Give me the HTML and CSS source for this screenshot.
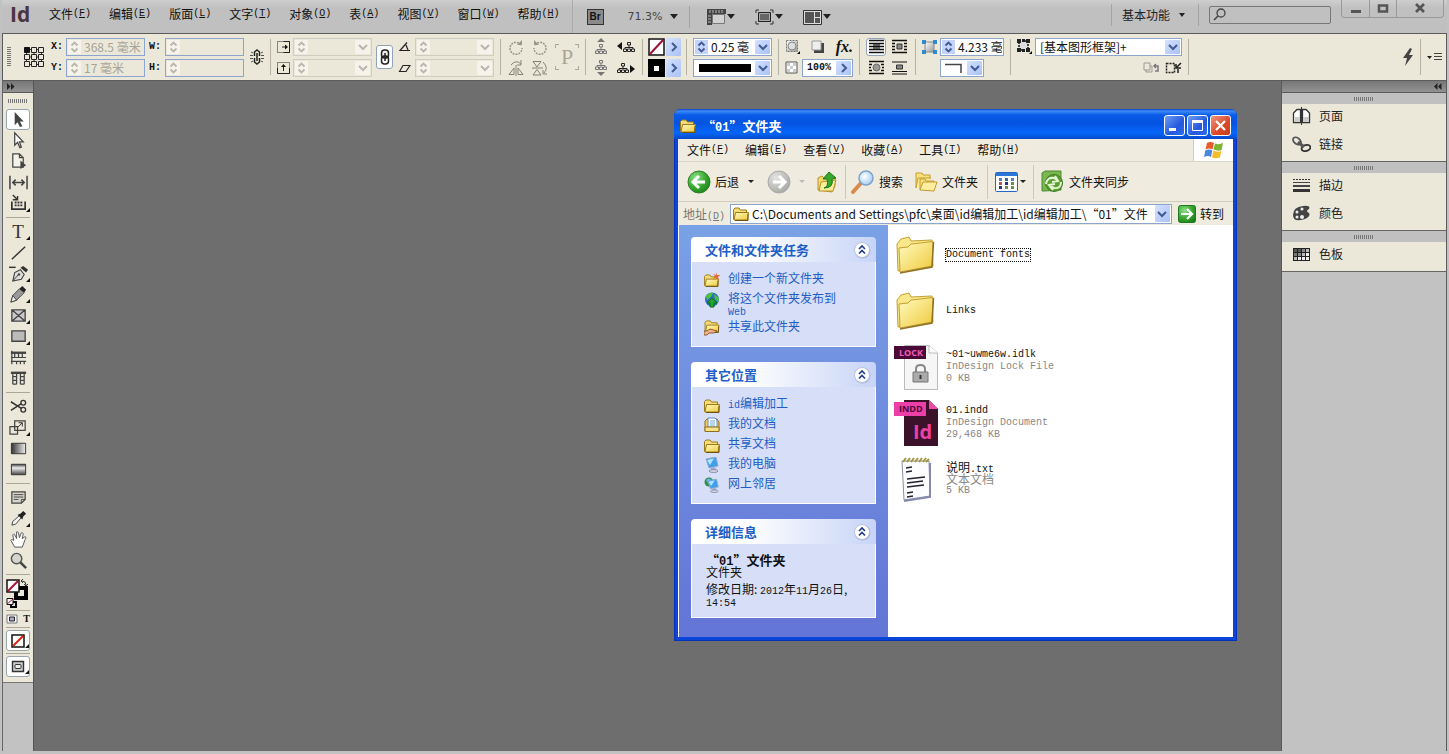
FILE: index.html
```html
<!DOCTYPE html>
<html lang="zh-CN">
<head>
  <meta charset="UTF-8">
  <meta name="viewport" content="width=device-width, initial-scale=1.0">
  <title>InDesign</title>
  <link rel="stylesheet" href="styles.css">
</head>
<body>
  <!-- Shared icon shapes -->
  <svg class="defs" width="0" height="0" aria-hidden="true">
    <defs>
      <linearGradient id="gFolder" x1="0" y1="0" x2="1" y2="1">
        <stop offset="0" stop-color="#fffbc0"/><stop offset="1" stop-color="#efc93c"/>
      </linearGradient>
      <linearGradient id="gGray" x1="0" y1="0" x2="1" y2="0">
        <stop offset="0" stop-color="#333"/><stop offset="1" stop-color="#eee"/>
      </linearGradient>
      <linearGradient id="gFeather" x1="0" y1="0" x2="0" y2="1">
        <stop offset="0" stop-color="#444"/><stop offset=".35" stop-color="#eee"/><stop offset="1" stop-color="#444"/>
      </linearGradient>
      <linearGradient id="gBox" x1="0" y1="0" x2="1" y2="1">
        <stop offset="0" stop-color="#fff"/><stop offset="1" stop-color="#999"/>
      </linearGradient>
      <radialGradient id="gGreen" cx="0.35" cy="0.3" r="0.8">
        <stop offset="0" stop-color="#8fe08a"/><stop offset="0.6" stop-color="#35a52c"/><stop offset="1" stop-color="#1c7d1a"/>
      </radialGradient>
      <radialGradient id="gDim" cx="0.35" cy="0.3" r="0.8">
        <stop offset="0" stop-color="#e4e4e2"/><stop offset="1" stop-color="#a3a3a0"/>
      </radialGradient>
      <radialGradient id="gLens" cx="0.4" cy="0.4" r="0.7">
        <stop offset="0" stop-color="#fff"/><stop offset="1" stop-color="#9cc8f0"/>
      </radialGradient>
    </defs>
    <symbol id="spin" viewBox="0 0 8 12"><path d="M1 4.500L4 1.500L7 4.500M1 7.500L4 10.500L7 7.500" fill="none" stroke="currentColor" stroke-width="1.800"/></symbol>
    <symbol id="down" viewBox="0 0 10 10"><path d="M1 3L5 7L9 3" fill="none" stroke="currentColor" stroke-width="2"/></symbol>
    <symbol id="right" viewBox="0 0 10 10"><path d="M3 1L7 5L3 9" fill="none" stroke="currentColor" stroke-width="2"/></symbol>
    <symbol id="folder" viewBox="0 0 16 14">
      <path d="M.5 12.500V2.500L2 1H6L7.500 3H13.500V5" fill="#f5dc78" stroke="#9c7a1c"/>
      <path d="M1 13L2.500 5.500H15.500L14.500 13Z" fill="url(#gFolder)" stroke="#9c7a1c"/>
      <path d="M2 13.500H15V7" fill="none" stroke="#6e540c"/>
    </symbol>
    <symbol id="bigfolder" viewBox="0 0 48 48">
      <path d="M6 40L5 13L9 8L17 6L19 10L40 9L41 35Z" fill="#fae98c" stroke="#c49f31"/>
      <path d="M8 41L7 17L16 16L19 13L41 10.500L40 35Z" fill="url(#gFolder)" stroke="#c49f31"/>
      <path d="M8 42L40 36L41.500 11" fill="none" stroke="#8f7320" stroke-width="1.500"/>
    </symbol>
    <symbol id="collapse" viewBox="0 0 18 18">
      <circle cx="9.500" cy="9.500" r="8" fill="#8d9cc8" opacity=".6"/>
      <circle cx="9" cy="9" r="7.500" fill="#fff" stroke="#b8c2e0"/>
      <path d="M6 8L9 5L12 8M6 12.500L9 9.500L12 12.500" fill="none" stroke="#1d3a85" stroke-width="1.600"/>
    </symbol>
    <symbol id="chain" viewBox="0 0 10 16">
      <rect x="1.500" y="1" width="7" height="8" rx="3" fill="#eee" stroke="#222" stroke-width="1.500"/>
      <rect x="1.500" y="7" width="7" height="8" rx="3" fill="none" stroke="#222" stroke-width="1.500"/>
      <path d="M5 4V12" stroke="#222" stroke-width="1.500"/>
    </symbol>
    <symbol id="tree" viewBox="0 0 12 10">
      <path d="M6 3V6M2 7V5.500H10V7" fill="none" stroke="currentColor"/>
      <path d="M4.500.5H7.500V3H4.500ZM.5 7H3.500V9.500H.5ZM4.500 7H7.500V9.500H4.500ZM8.500 7H11.500V9.500H8.500Z" fill="none" stroke="currentColor"/>
    </symbol>
    <symbol id="pc" viewBox="0 0 16 16">
      <path d="M2 2L12 0L14 9L5 11Z" fill="#3f9fe8" stroke="#8fabd0"/>
      <path d="M3 3L10 1.500L6 8Z" fill="#b5e2ff"/>
      <path d="M7 11L11 10L12 13L8 14Z" fill="#a5abc4"/>
      <ellipse cx="9.500" cy="14" rx="4.500" ry="1.500" fill="#cfd3e2" stroke="#7a7f9c" stroke-width=".8"/>
    </symbol>
  </svg>

  <div class="app">
    <!-- Application menu -->
    <header class="menubar">
      <span class="logo">Id</span>
      <nav class="menus">
        <button>文件<span class="en">(<u>F</u>)</span></button>
        <button>编辑<span class="en">(<u>E</u>)</span></button>
        <button>版面<span class="en">(<u>L</u>)</span></button>
        <button>文字<span class="en">(<u>T</u>)</span></button>
        <button>对象<span class="en">(<u>O</u>)</span></button>
        <button>表<span class="en">(<u>A</u>)</span></button>
        <button>视图<span class="en">(<u>V</u>)</span></button>
        <button>窗口<span class="en">(<u>W</u>)</span></button>
        <button>帮助<span class="en">(<u>H</u>)</span></button>
      </nav>
      <div class="appbar">
        <button class="bridge">Br</button>
        <button class="zoom">71.3%<i class="tri"></i></button>
        <span class="vline"></span>
        <button class="view" aria-label="视图选项">
          <svg width="19" height="16" viewBox="0 0 19 16"><path d="M0 0H19V5H5V16H0Z" fill="#444"/><path d="M3 1V4M6 1V4M9 1V4M12 1V4M15 1V4M1 7H4M1 10H4M1 13H4" stroke="#bbb"/><path d="M5.500 5.500H17.500V14.500H5.500Z" fill="#d2d2d2" stroke="#777"/></svg><i class="tri"></i>
        </button>
        <button class="view" aria-label="屏幕模式">
          <svg width="19" height="16" viewBox="0 0 19 16"><path d="M1 4V1H4M15 1H18V4M18 12V15H15M4 15H1V12" fill="none" stroke="#333"/><path d="M3.500 3.500H15.500V12.500H3.500Z" fill="#666" stroke="#222"/><path d="M4.500 4.500H14.500V11.500H4.500Z" fill="none" stroke="#aaa"/></svg><i class="tri"></i>
        </button>
        <button class="view" aria-label="排列文档">
          <svg width="19" height="16" viewBox="0 0 19 16"><path d="M.5 1.500H18.500V15.500H.5Z" fill="#ddd" stroke="#333"/><path d="M2 3H11V14H2ZM12 3H17V8H12ZM12 9H17V14H12Z" fill="#555"/></svg><i class="tri"></i>
        </button>
      </div>
      <div class="menuright">
        <span class="vline"></span>
        <button class="workspace">基本功能<i class="tri small"></i></button>
        <span class="vline"></span>
        <label class="search">
          <svg width="13" height="13" viewBox="0 0 13 13"><circle cx="8" cy="5" r="4" fill="none" stroke="#444" stroke-width="1.300"/><path d="M5 8L1 12" stroke="#444" stroke-width="1.600"/></svg>
          <input type="text" aria-label="搜索">
        </label>
        <div class="winbtns">
          <button aria-label="最小化"><svg width="12" height="12"><path d="M1 7H11V10H1Z" fill="#555"/></svg></button>
          <button aria-label="最大化"><svg width="12" height="12"><path d="M2 2.500H10V8.500H2Z" fill="none" stroke="#555" stroke-width="2.500"/></svg></button>
          <button aria-label="关闭"><svg width="12" height="12"><path d="M2 1L10 9M10 1L2 9" stroke="#555" stroke-width="2.600"/></svg></button>
        </div>
      </div>
    </header>

    <!-- Control panel -->
    <div class="control">
      <span class="grip-v"></span>
      <svg class="ref" width="20" height="20" viewBox="0 0 20 20"><path d="M2.500 2.500H17.500V17.500H2.500ZM10 2V18M2 10H18" fill="none" stroke="#333"/><path d="M.5.500H5.500V5.500H.5Z" fill="#111" stroke="#111"/><path d="M7.500.5H12.500V5.500H7.500ZM14.500.5H19.500V5.500H14.500ZM.5 7.500H5.500V12.500H.5ZM7.500 7.500H12.500V12.500H7.500ZM14.500 7.500H19.500V12.500H14.500ZM.5 14.500H5.500V19.500H.5ZM7.500 14.500H12.500V19.500H7.500ZM14.500 14.500H19.500V19.500H14.500Z" fill="#ece8d9" stroke="#222"/></svg>
      <div class="group pos">
        <label for="x">X:</label>
        <span class="field off"><svg><use href="#spin"/></svg><input id="x" type="text" value="368.5 毫米" disabled></span>
        <label for="w">W:</label>
        <span class="field off"><svg><use href="#spin"/></svg><input id="w" type="text" disabled></span>
        <label for="y">Y:</label>
        <span class="field off"><svg><use href="#spin"/></svg><input id="y" type="text" value="17 毫米" disabled></span>
        <label for="h">H:</label>
        <span class="field off"><svg><use href="#spin"/></svg><input id="h" type="text" disabled></span>
      </div>
      <svg width="14" height="18" viewBox="0 0 14 18"><path d="M4.500 8V4L7 2L9.500 4V8M4.500 10V14L7 16L9.500 14V10M7 5V13" fill="none" stroke="#222" stroke-width="1.500"/><path d="M1 4L3 5M0 7.500H3M0 10.500H3M1 14L3 13M13 4L11 5M14 7.500H11M14 10.500H11M13 14L11 13" stroke="#555"/></svg>
      <span class="sep"></span>
      <div class="chained">
        <div class="group scale">
          <svg width="13" height="14" viewBox="0 0 13 14"><path d="M.5 1.500H12.500V12.500H.5Z" fill="none" stroke="#222" stroke-dasharray="1 1"/><path d="M6.500 1.500H12.500V12.500H6.500M5 7H10" fill="none" stroke="#222"/><path d="M8 4.500L11 7L8 9.500Z" fill="#111"/></svg>
          <span class="field dim"><svg><use href="#spin"/></svg><input type="text" aria-label="X 缩放" disabled><button disabled aria-label="X 缩放列表"><svg><use href="#down"/></svg></button></span>
          <svg width="13" height="14" viewBox="0 0 13 14"><path d="M.5 1.500H12.500V12.500H.5Z" fill="none" stroke="#222" stroke-dasharray="1 1"/><path d="M.5 7V12.500H12.500V7M6.500 4V10" fill="none" stroke="#222"/><path d="M4 6L6.500 3L9 6Z" fill="#111"/></svg>
          <span class="field dim"><svg><use href="#spin"/></svg><input type="text" aria-label="Y 缩放" disabled><button disabled aria-label="Y 缩放列表"><svg><use href="#down"/></svg></button></span>
        </div>
        <button class="link" aria-label="约束缩放比例"><svg width="10" height="16"><use href="#chain"/></svg></button>
        <div class="group shear">
          <svg width="13" height="12" viewBox="0 0 13 12"><path d="M12 9.500H2L9 1.500M8 4L10 9" fill="none" stroke="#222" stroke-width="1.200"/></svg>
          <span class="field dim"><svg><use href="#spin"/></svg><input type="text" aria-label="旋转角度" disabled><button disabled aria-label="旋转列表"><svg><use href="#down"/></svg></button></span>
          <svg width="13" height="12" viewBox="0 0 13 12"><path d="M1.500 9.500L5 3.500H12L8 9.500Z" fill="none" stroke="#222" stroke-width="1.200"/></svg>
          <span class="field dim"><svg><use href="#spin"/></svg><input type="text" aria-label="切变角度" disabled><button disabled aria-label="切变列表"><svg><use href="#down"/></svg></button></span>
        </div>
      </div>
      <span class="sep"></span>
      <div class="group rotate">
        <svg width="16" height="16" viewBox="0 0 16 16"><path d="M13 6A6 6 0 1 0 14 9" fill="none" stroke="#99958a" stroke-width="1.500" stroke-dasharray="2 1"/><path d="M9 6H14V1Z" fill="#99958a"/></svg>
        <svg width="16" height="16" viewBox="0 0 16 16"><path d="M3 6A6 6 0 1 1 2 9" fill="none" stroke="#99958a" stroke-width="1.500" stroke-dasharray="2 1"/><path d="M7 6H2V1Z" fill="#99958a"/></svg>
        <svg width="16" height="16" viewBox="0 0 16 16"><path d="M1 14.500L6 8V14.500ZM15 14.500L10 8V14.500ZM8 5V16" fill="none" stroke="#858176"/><path d="M3 5Q8-1 13 4M13 0V5H9" fill="none" stroke="#858176"/></svg>
        <svg width="16" height="16" viewBox="0 0 16 16"><path d="M1 1.500H9L5 7ZM1 15H9L5 9.500ZM0 8H11" fill="none" stroke="#858176"/><path d="M11 2Q17 8 12 13M15 14H11V10" fill="none" stroke="#858176"/></svg>
      </div>
      <span class="pmark">P</span>
      <span class="sep"></span>
      <div class="group select">
        <svg width="14" height="17" viewBox="0 0 14 17"><path d="M7 0L3 4H11Z" fill="#777"/><use href="#tree" x="1" y="6" width="12" height="10" color="#777"/></svg>
        <svg width="19" height="14" viewBox="0 0 19 14"><path d="M5 2V10L0 6Z" fill="#111"/><use href="#tree" x="6" y="2" width="12" height="10" color="#222"/></svg>
        <svg width="14" height="17" viewBox="0 0 14 17"><path d="M7 17L3 13H11Z" fill="#777"/><use href="#tree" x="1" y="1" width="12" height="10" color="#777"/></svg>
        <svg width="19" height="14" viewBox="0 0 19 14"><path d="M13 4V12L18 8Z" fill="#111"/><use href="#tree" x="0" y="2" width="12" height="10" color="#222"/></svg>
      </div>
      <span class="sep"></span>
      <div class="group paint">
        <svg width="17" height="18" viewBox="0 0 17 18"><path d="M1 1H16V17H1Z" fill="#fff" stroke="#111" stroke-width="1.500"/><path d="M2 16L15 2" stroke="#a00f35" stroke-width="2"/></svg>
        <button class="chev" aria-label="填色"><svg><use href="#right"/></svg></button>
        <svg width="17" height="18" viewBox="0 0 17 18"><path d="M0 0H17V18H0Z" fill="#000"/><path d="M6 7H11V12H6Z" fill="#fff"/></svg>
        <button class="chev" aria-label="描边"><svg><use href="#right"/></svg></button>
      </div>
      <span class="sep"></span>
      <div class="group weight">
        <span class="field"><svg><use href="#spin"/></svg><input type="text" aria-label="描边粗细" value="0.25 毫"><button aria-label="粗细列表"><svg><use href="#down"/></svg></button></span>
        <span class="field"><b class="stroke"></b><button aria-label="描边类型"><svg><use href="#down"/></svg></button></span>
      </div>
      <span class="sep"></span>
      <div class="effects">
        <div class="fxrow">
          <svg width="16" height="16" viewBox="0 0 16 16"><path d="M1.500 1.500H12.500V12.500H1.500Z" fill="url(#gBox)" stroke="#777" stroke-dasharray="2 1"/><circle cx="7" cy="7" r="4" fill="#ddd" stroke="#888"/><path d="M15 12V15H12Z"/></svg>
          <svg width="16" height="16" viewBox="0 0 16 16"><path d="M4 4H14V14H4Z" fill="#444"/><path d="M2 2H11V11H2Z" fill="#eee" stroke="#999"/></svg>
          <span class="fx">fx.</span>
        </div>
        <div class="fxrow">
          <svg width="13" height="13" viewBox="0 0 13 13"><path d="M1 1H12V12H1Z" fill="#fff" stroke="#555"/><path d="M2 2H5V5H2ZM8 2H11V5H8ZM5 5H8V8H5ZM2 8H5V11H2ZM8 8H11V11H8Z" fill="#ccc"/></svg>
          <span class="field opacity"><input type="text" aria-label="不透明度" value="100%"><button aria-label="不透明度滑块"><svg><use href="#right"/></svg></button></span>
        </div>
      </div>
      <span class="sep"></span>
      <div class="group wrap">
        <button class="on" aria-label="无文本绕排"><svg width="15" height="15" viewBox="0 0 15 15"><path d="M4 4H11V11H4Z" fill="#777"/><path d="M0 1.500H15M0 4.500H15M0 7.500H15M0 10.500H15M0 13.500H15" stroke="#111" stroke-width="1.500"/></svg></button>
        <button aria-label="沿定界框绕排"><svg width="15" height="15" viewBox="0 0 15 15"><path d="M5 5H10V10H5Z" fill="#888" stroke="#333"/><path d="M0 1.500H15M0 13.500H15M0 4.500H3M0 7.500H3M0 10.500H3M12 4.500H15M12 7.500H15M12 10.500H15" stroke="#111" stroke-width="1.500"/></svg></button>
        <button aria-label="沿对象形状绕排"><svg width="15" height="15" viewBox="0 0 15 15"><circle cx="7.500" cy="7.500" r="3.500" fill="#999" stroke="#666"/><path d="M0 1.500H15M0 13.500H15M0 4.500H3M0 7.500H2M0 10.500H3M12 4.500H15M13 7.500H15M12 10.500H15" stroke="#111" stroke-width="1.500"/></svg></button>
        <button aria-label="上下型绕排"><svg width="15" height="15" viewBox="0 0 15 15"><path d="M4.500 5H10.500V9H4.500Z" fill="#888" stroke="#333"/><path d="M0 2H15M0 11.500H15M0 14H15" stroke="#111" stroke-width="1.200"/></svg></button>
      </div>
      <span class="sep"></span>
      <div class="group corner">
        <svg width="15" height="16" viewBox="0 0 15 16"><path d="M3 3H12V13H3Z" fill="url(#gBox)" stroke="#888"/><path d="M0 1H4V5H0ZM11 1H15V5H11ZM0 11H4V15H0ZM11 11H15V15H11Z" fill="#2d8bd0"/></svg>
        <span class="field"><svg><use href="#spin"/></svg><input type="text" aria-label="角大小" value="4.233 毫"></span>
        <span></span>
        <span class="field shape"><svg class="angle" width="18" height="10" viewBox="0 0 18 10"><path d="M0 1.500H16V10" fill="none" stroke="#444" stroke-width="1.500"/></svg><button aria-label="角形状"><svg><use href="#down"/></svg></button></span>
      </div>
      <span class="sep"></span>
      <div class="group style">
        <svg width="15" height="15" viewBox="0 0 15 15"><path d="M2 2H11V11H2Z" fill="#ddd" stroke="#111" stroke-width="1.500" stroke-dasharray="2 1"/><path d="M0 0H4V4H0ZM9 0H13V4H9ZM0 9H4V13H0ZM9 9H13V13H9ZM5 0H8V3H5ZM5 10H8V13H5Z" fill="#222"/><path d="M15 12V15H12Z"/></svg>
        <span class="drop">
          <select aria-label="对象样式"><option>[基本图形框架]+</option></select>
          <span class="chev"><svg><use href="#down"/></svg></span>
        </span>
        <span></span>
        <span class="overrides">
          <svg width="17" height="12" viewBox="0 0 17 12"><path d="M1 1H7V8H1ZM3 8V10H9V4H7" fill="none" stroke="#999"/><path d="M11 4H15V9H12M13 2L11 4L13 6" fill="none" stroke="#777" stroke-width="1.500"/></svg>
          <svg width="17" height="12" viewBox="0 0 17 12"><path d="M1.500 1.500H9.500V10.500H1.500Z" fill="none" stroke="#222" stroke-width="1.500" stroke-dasharray="2 1"/><path d="M16 1L11 6M11 2V6H16M13 7V11" fill="none" stroke="#222" stroke-width="1.500"/></svg>
        </span>
      </div>
      <span class="sep"></span>
      <div class="quick">
        <svg width="12" height="18" viewBox="0 0 12 18"><path d="M8 0L1 10H5L3 18L11 7H7L10 1Z" fill="#444"/></svg>
        <span class="sep"></span>
        <svg width="15" height="10" viewBox="0 0 15 10"><path d="M0 4H5L2.500 7Z" fill="#222"/><path d="M7 1.500H15M7 4.500H15M7 7.500H15" stroke="#444"/></svg>
      </div>
    </div>

    <main class="stage">
      <!-- Tools panel -->
      <aside class="tools">
        <div class="cap"><svg width="8" height="7" viewBox="0 0 8 7"><path d="M0 0L3.500 3.500L0 7ZM4 0L7.500 3.500L4 7Z" fill="#222"/></svg></div>
        <span class="grip"></span>
        <button class="tool on" aria-label="选择"><svg viewBox="0 0 20 20"><path d="M6 2V16L9 13L11.500 18L14 17L11.500 12H15.500Z" fill="#444"/></svg></button>
        <button class="tool" aria-label="直接选择"><svg viewBox="0 0 20 20"><path d="M6 2V15L9 12L11.500 17.500L13 17L11 11.500H15Z" fill="#fff" stroke="#444" stroke-width="1.300"/></svg></button>
        <button class="tool" aria-label="页面"><svg viewBox="0 0 20 20"><path d="M4 2H11L15 6V16H4ZM11 2V6H15" fill="#f5f3e8" stroke="#444" stroke-width="1.300"/><path d="M12 9V18L18 14Z" fill="#444"/></svg></button>
        <button class="tool" aria-label="间隙"><svg viewBox="0 0 20 20"><path d="M1 3V17M19 3V17M4 10H16M7 7L4 10L7 13M13 7L16 10L13 13" fill="none" stroke="#444" stroke-width="1.600"/></svg></button>
        <button class="tool more" aria-label="内容收集器"><svg viewBox="0 0 20 20"><path d="M3 8V16H17V8" fill="none" stroke="#333" stroke-width="1.800"/><path d="M4 1L9 6M9 2V6H4" fill="none" stroke="#333" stroke-width="1.500"/><path d="M6 9H14M6 12H14" stroke="#333" stroke-width="2" stroke-dasharray="2 1"/></svg></button>
        <hr>
        <button class="tool more type" aria-label="文字">T</button>
        <button class="tool" aria-label="直线"><svg viewBox="0 0 20 20"><path d="M3 17L17 4" stroke="#333" stroke-width="1.500"/></svg></button>
        <button class="tool more" aria-label="钢笔"><svg viewBox="0 0 20 20"><path d="M4 18L6 9L12 6L16 11L13 16Z" fill="#ddd" stroke="#444" stroke-width="1.200"/><path d="M4 18L10 11" stroke="#444"/><circle cx="10.500" cy="11" r="1.300" fill="#444"/><path d="M12 4L18 9L20 6L15 2Z" fill="#333"/><path d="M0 3.500H7" stroke="#333" stroke-width="1.500"/></svg></button>
        <button class="tool more" aria-label="铅笔"><svg viewBox="0 0 20 20"><path d="M2 18L4 11L11 4L16 8L8 16Z" fill="#999" stroke="#444"/><path d="M2 18L4 11L8 16Z" fill="#eee" stroke="#444"/><path d="M11 4L14 1L18 5L16 8Z" fill="#222"/></svg></button>
        <button class="tool more" aria-label="矩形框架"><svg viewBox="0 0 20 20"><path d="M3 4H17V16H3ZM3 4L17 16M17 4L3 16" fill="#ccc9cc" stroke="#444" stroke-width="1.400"/></svg></button>
        <button class="tool more" aria-label="矩形"><svg viewBox="0 0 20 20"><path d="M3 4H17V15H3Z" fill="#bbb" stroke="#444" stroke-width="1.400"/></svg></button>
        <button class="tool" aria-label="水平网格"><svg viewBox="0 0 20 20"><path d="M2 5H18" stroke="#444" stroke-width="2.500"/><path d="M2 10H18M2 14H18M6 5V10M10 5V10M14 5V10M8 14V17M12 14V17M16 14V17M3 3V17" fill="none" stroke="#444" stroke-width="1.300"/></svg></button>
        <button class="tool" aria-label="垂直网格"><svg viewBox="0 0 20 20"><path d="M2 4H18" stroke="#444" stroke-width="2.500"/><path d="M4 4V16M8 4V16M12 4V16M16 4V16M4 8H8M4 12H8M12 8H16M12 12H16M4 16H8M12 16H16" fill="none" stroke="#444" stroke-width="1.300"/></svg></button>
        <hr>
        <button class="tool" aria-label="剪刀"><svg viewBox="0 0 20 20"><path d="M2 5L13 12M2 14L13 7" stroke="#333" stroke-width="1.600"/><circle cx="15" cy="6" r="2.500" fill="none" stroke="#333" stroke-width="1.400"/><circle cx="15" cy="13.500" r="2.500" fill="none" stroke="#333" stroke-width="1.400"/></svg></button>
        <button class="tool more" aria-label="自由变换"><svg viewBox="0 0 20 20"><path d="M1 9H9V17H1Z" fill="none" stroke="#444" stroke-width="1.300"/><path d="M6 3H17V13H6Z" fill="none" stroke="#444" stroke-width="1.300"/><path d="M9 10L14 5M10 5H14V9" fill="none" stroke="#333"/></svg></button>
        <button class="tool" aria-label="渐变色板"><svg viewBox="0 0 20 20"><path d="M2.500 4.500H17.500V15.500H2.500Z" fill="url(#gGray)" stroke="#333"/></svg></button>
        <button class="tool" aria-label="渐变羽化"><svg viewBox="0 0 20 20"><path d="M2.500 4.500H17.500V15.500H2.500Z" fill="url(#gFeather)" stroke="#333"/></svg></button>
        <hr>
        <button class="tool" aria-label="附注"><svg viewBox="0 0 20 20"><path d="M3 4H17V12L13 16H3Z" fill="#d6d4ca" stroke="#444" stroke-width="1.300"/><path d="M5 7H15M5 9.500H15M5 12H10M17 12H13V16" fill="none" stroke="#444"/></svg></button>
        <button class="tool more" aria-label="吸管"><svg viewBox="0 0 20 20"><path d="M3 17L4 13L11 7L13 9L7 16Z" fill="#f4f4f4" stroke="#444"/><path d="M9 6L14 11L15 8L18 5L15 2L12 5Z" fill="#222"/></svg></button>
        <button class="tool" aria-label="抓手"><svg viewBox="0 0 20 20"><path d="M6 18L2 11Q2 9 5 11L4 5Q5 3 6 5L8 9L8 2Q9 1 10 3L11 8L13 3Q14 2 15 4L14 9L17 7Q19 7 17 10L14 18Z" fill="#fff" stroke="#555"/></svg></button>
        <button class="tool" aria-label="缩放"><svg viewBox="0 0 20 20"><circle cx="8" cy="8" r="5.500" fill="#d5d5d0" stroke="#555" stroke-width="1.500"/><path d="M12 12L18 18" stroke="#444" stroke-width="2.600"/></svg></button>
        <hr>
        <svg class="fillstroke" width="24" height="30" viewBox="0 0 24 30"><path d="M10 10H20V20H10Z" fill="none" stroke="#000" stroke-width="4"/><path d="M1 2H13V14H1Z" fill="#fff" stroke="#111" stroke-width="1.500"/><path d="M2 13L12 3" stroke="#b01038" stroke-width="2"/><path d="M16 3Q20 3 20 7M18 6L20 8L22 6M17 1L15 3L17 5" fill="none" stroke="#333"/><path d="M5 24H10V29H5Z" fill="none" stroke="#000" stroke-width="2"/><path d="M1 20.500H7V26.500H1Z" fill="#fff" stroke="#111"/><path d="M1 26L7 21" stroke="#b01038"/></svg>
        <hr class="tight">
        <div class="affect">
          <svg width="12" height="10" viewBox="0 0 12 10"><path d="M1 1H11V9H1Z" fill="#fff" stroke="#777"/><path d="M3.500 3H8.500V7H3.500Z" fill="#aac" stroke="#222"/></svg>
          <b>T</b>
        </div>
        <hr class="tight">
        <button class="mode more" aria-label="应用无"><svg width="14" height="14" viewBox="0 0 14 14"><path d="M1 1H13V13H1Z" fill="#fff" stroke="#111" stroke-width="1.500"/><path d="M2 12L12 2" stroke="#e02010" stroke-width="2"/></svg></button>
        <hr class="tight">
        <button class="mode more" aria-label="正常模式"><svg width="14" height="14" viewBox="0 0 14 14"><path d="M1.500 1.500H12.500V11.500H1.500Z" fill="#ccc" stroke="#333" stroke-width="1.400"/><rect x="4" y="4.500" width="6" height="4" rx="1" fill="#eee" stroke="#333"/></svg></button>
      </aside>

      <!-- Panel dock -->
      <aside class="dock">
        <div class="cap"><svg width="8" height="7" viewBox="0 0 8 7"><path d="M3.500 0L0 3.500L3.500 7ZM7.500 0L4 3.500L7.500 7Z" fill="#222"/></svg></div>
        <section>
          <span class="grip"></span>
          <button><svg width="19" height="18" viewBox="0 0 19 18"><path d="M1.500 6L5 2.500H8.500V15.500H1.500ZM17.500 6L14 2.500H10.500V15.500H17.500Z" fill="#fff" stroke="#333" stroke-width="1.300"/><path d="M9.500 0V18" stroke="#333"/><path d="M11 10H17V15H11ZM3 10H8V15H3Z" fill="#ccc"/></svg>页面</button>
          <button><svg width="19" height="18" viewBox="0 0 19 18"><ellipse cx="5" cy="6" rx="4.500" ry="3" transform="rotate(40 5 6)" fill="none" stroke="#555" stroke-width="1.800"/><ellipse cx="14" cy="13" rx="4.500" ry="3" transform="rotate(-15 14 13)" fill="none" stroke="#333" stroke-width="1.800"/><path d="M6 7L12 12" stroke="#555" stroke-width="3"/></svg>链接</button>
        </section>
        <section>
          <span class="grip"></span>
          <button><svg width="19" height="18" viewBox="0 0 19 18"><path d="M1 3.500H18" stroke="#333" stroke-dasharray="2 1"/><path d="M1 6.500H18" stroke="#444"/><path d="M1 10H18" stroke="#444" stroke-width="2"/><path d="M1 14.500H18" stroke="#333" stroke-width="3"/></svg>描边</button>
          <button><svg width="19" height="18" viewBox="0 0 19 18"><path d="M1 11Q1 3 11 2Q19 1 17 5Q13 7 17 9Q19 12 13 15Q1 19 1 11Z" fill="#444"/><circle cx="5" cy="8" r="1.500" fill="#eee"/><circle cx="10" cy="5" r="1.500" fill="#eee"/><circle cx="5" cy="13" r="1.500" fill="#eee"/><circle cx="10" cy="13" r="2" fill="#eee"/></svg>颜色</button>
        </section>
        <section>
          <span class="grip"></span>
          <button><svg width="19" height="18" viewBox="0 0 19 18"><path d="M1 3H18V16H1Z" fill="#222"/><path d="M2 4H5V7H2ZM6 4H9V7H6Z" fill="#555"/><path d="M10 4H13V7H10ZM6 8H9V11H6Z" fill="#888"/><path d="M14 4H17V7H14ZM10 8H13V11H10ZM2 12H5V15H2Z" fill="#bbb"/><path d="M2 8H5V11H2Z" fill="#777"/><path d="M14 8H17V11H14ZM6 12H9V15H6ZM10 12H13V15H10ZM14 12H17V15H14Z" fill="#eee"/></svg>色板</button>
        </section>
      </aside>
    </main>
  </div>

  <!-- Explorer window -->
  <div class="window">
    <div class="titlebar">
      <svg width="16" height="14"><use href="#folder"/></svg>
      <h1>“<span class="en">01</span>”文件夹</h1>
      <div class="caption">
        <button aria-label="最小化"><svg width="19" height="19"><path d="M4 12H11V15H4Z" fill="#fff"/></svg></button>
        <button aria-label="最大化"><svg width="19" height="19"><path d="M4.500 5.500H14.500V14.500H4.500Z" fill="none" stroke="#fff"/><path d="M4 4H15V7H4Z" fill="#fff"/></svg></button>
        <button class="close" aria-label="关闭"><svg width="19" height="19"><path d="M5 5L14 14M14 5L5 14" stroke="#fff" stroke-width="2.200"/></svg></button>
      </div>
    </div>
    <div class="client">
      <div class="xmenu">
        <button>文件<span class="en">(<u>F</u>)</span></button>
        <button>编辑<span class="en">(<u>E</u>)</span></button>
        <button>查看<span class="en">(<u>V</u>)</span></button>
        <button>收藏<span class="en">(<u>A</u>)</span></button>
        <button>工具<span class="en">(<u>T</u>)</span></button>
        <button>帮助<span class="en">(<u>H</u>)</span></button>
        <span class="flag"><svg width="20" height="18" viewBox="0 0 20 18"><path d="M3 2Q6 0 10 2L8.500 8.500Q5 6.500 1.500 8.500Z" fill="#e8592b"/><path d="M11 2.500Q15 4 19 2L17.500 9Q14 10.500 9.500 8.500Z" fill="#7cb52f"/><path d="M1.300 9.500Q5 7.500 8.300 9.500L7 16Q4 14 0 16Z" fill="#4a86dc"/><path d="M9.300 9.500Q13 11.500 17.300 10L16 16.500Q12 18 8 16.500Z" fill="#f5bd2c"/></svg></span>
      </div>
      <div class="xtools">
        <button class="back"><svg width="24" height="24" viewBox="0 0 24 24"><circle cx="12" cy="12" r="11" fill="url(#gGreen)" stroke="#2c7f28"/><path d="M12 6L6 12L12 18M6.500 12H18" fill="none" stroke="#fff" stroke-width="3"/></svg>后退<i class="tri tiny"></i></button>
        <button class="forward" aria-label="前进"><svg width="24" height="24" viewBox="0 0 24 24"><circle cx="12" cy="12" r="11" fill="url(#gDim)" stroke="#aaa"/><path d="M12 6L18 12L12 18M17.500 12H6" fill="none" stroke="#fff" stroke-width="3"/></svg><i class="tri tiny pale"></i></button>
        <button class="up" aria-label="向上"><svg width="22" height="24" viewBox="0 0 22 24"><path d="M2 20V8L6 6L8 8L19 7V16L16 22Z" fill="#f4dc70" stroke="#b8922a"/><path d="M3 21L5 12L20 10L17 21Z" fill="#fbec9c" stroke="#b8922a"/><path d="M8 18Q13 17 11 9H7L13 2L20 8L16 9Q18 18 8 18Z" fill="#35a82d" stroke="#1b761a"/></svg></button>
        <span class="xsep"></span>
        <button class="find"><svg width="24" height="24" viewBox="0 0 24 24"><path d="M10 13L2 22" stroke="#d98b4c" stroke-width="4" stroke-linecap="round"/><circle cx="15" cy="8" r="7" fill="url(#gLens)" stroke="#7fa2cc" stroke-width="1.500"/></svg>搜索</button>
        <button class="dirs"><svg width="24" height="24" viewBox="0 0 24 24"><path d="M2 18V3L8 3L9 5H16V9" fill="#f8e27c" stroke="#c39a2e"/><path d="M2 18L4 8H17" fill="#fbee9f" stroke="#c39a2e"/><path d="M6 20V9H11L12 11H20V14" fill="#f8e27c" stroke="#c39a2e"/><path d="M6 20L9 12L23 12L20 21Z" fill="#fcee9e" stroke="#c39a2e"/></svg>文件夹</button>
        <span class="xsep"></span>
        <button class="views" aria-label="查看"><svg width="23" height="20" viewBox="0 0 23 20"><rect x=".5" y=".5" width="22" height="19" rx="1" fill="#fff" stroke="#2567c4"/><path d="M1 1H22V4H1Z" fill="#2b76d9"/><path d="M4 6H7V9H4ZM16 6H19V9H16Z" fill="#557ec2"/><path d="M10 6H13V9H10Z" fill="#2a6f9c"/><path d="M4 10H7V13H4Z" fill="#b3574b"/><path d="M10 10H13V13H10ZM4 14H7V17H4Z" fill="#1c3784"/><path d="M16 10H19V13H16ZM10 14H13V17H10ZM16 14H19V17H16Z" fill="#6c8a51"/></svg><i class="tri tiny"></i></button>
        <span class="xsep"></span>
        <button class="sync"><svg width="23" height="23" viewBox="0 0 23 23"><path d="M1 3L4 1H20V20L3 21H1Z" fill="#7ab84f" stroke="#4b8a2f"/><circle cx="13" cy="13" r="8.500" fill="#5ca032" stroke="#3c7a20"/><path d="M5 14Q6 7 13 8L16 10M14 6L17 11L11 12M20 12Q20 19 13 18L9 16M12 20L8 15L14 14" fill="none" stroke="#e5f5d4" stroke-width="2"/></svg>文件夹同步</button>
      </div>
      <div class="address">
        <label for="addr">地址<span class="en">(<u>D</u>)</span></label>
        <span class="addrbox">
          <svg width="16" height="14"><use href="#folder"/></svg>
          <input id="addr" type="text" value="C:\Documents and Settings\pfc\桌面\id编辑加工\id编辑加工\“01”文件">
          <button class="chev" aria-label="地址列表"><svg><use href="#down"/></svg></button>
        </span>
        <button class="go"><svg width="18" height="18" viewBox="0 0 18 18"><rect x=".5" y=".5" width="17" height="17" rx="2" fill="url(#gGreen)" stroke="#1f7a1c"/><path d="M9 4L14 9L9 14M3 9H13" fill="none" stroke="#fff" stroke-width="2.200"/></svg>转到</button>
      </div>
      <div class="xbody">
        <div class="sidepane">
          <section class="card">
            <h2>文件和文件夹任务<button aria-label="折叠"><svg width="18" height="18"><use href="#collapse"/></svg></button></h2>
            <ul>
              <li><svg width="16" height="16" viewBox="0 0 16 16"><use href="#folder" y="2" width="15" height="13"/><path d="M12 0L13 3L16 3L14 5L15 8L12 6L9 7L11 4L9 2L12 3Z" fill="#e46a32"/></svg><a href="#">创建一个新文件夹</a></li>
              <li><svg width="16" height="16" viewBox="0 0 16 16"><circle cx="8" cy="7.500" r="7" fill="#2d6fc0"/><path d="M2 4Q5 0 9 1L7 5L3 8ZM10 2L15 6L14 10L11 7Z" fill="#4ec23e"/><path d="M8 6L13 11H10V15H6V11H3Z" fill="#1fa72a" stroke="#0b6b18"/></svg><a href="#">将这个文件夹发布到<br><span class="en">Web</span></a></li>
              <li><svg width="16" height="16" viewBox="0 0 16 16"><use href="#folder" width="16" height="13"/><path d="M0 11H3L6 9L13 11L10 13H5L3 15H0Z" fill="#f2b48a" stroke="#744018" stroke-width=".8"/></svg><a href="#">共享此文件夹</a></li>
            </ul>
          </section>
          <section class="card">
            <h2>其它位置<button aria-label="折叠"><svg width="18" height="18"><use href="#collapse"/></svg></button></h2>
            <ul>
              <li><svg width="16" height="16"><use href="#folder" y="2" height="14"/></svg><a href="#"><span class="en">id</span>编辑加工</a></li>
              <li><svg width="16" height="16" viewBox="0 0 16 16"><path d="M1 14V4L3 2H13L15 5V14Z" fill="#f0cf62" stroke="#8f6f1c"/><path d="M4 1H11L13 3V10H4Z" fill="#fff" stroke="#5c8ac4"/><path d="M6 4H11M6 6H11M6 8H11" stroke="#6ea6e0"/><path d="M1 10H15V14.500H1Z" fill="#f8e288" stroke="#8f6f1c"/></svg><a href="#">我的文档</a></li>
              <li><svg width="16" height="16"><use href="#folder" y="2" height="14"/></svg><a href="#">共享文档</a></li>
              <li><svg width="16" height="16"><use href="#pc"/></svg><a href="#">我的电脑</a></li>
              <li><svg width="16" height="16" viewBox="0 0 16 16"><circle cx="5" cy="5" r="4.500" fill="#2c8f4c"/><path d="M2 3Q5 0 7 3L4 6Z" fill="#65b3e8"/><use href="#pc" x="2" y="2" width="14" height="14"/></svg><a href="#">网上邻居</a></li>
            </ul>
          </section>
          <section class="card">
            <h2>详细信息<button aria-label="折叠"><svg width="18" height="18"><use href="#collapse"/></svg></button></h2>
            <div class="details">
              <strong>“<span class="en">01</span>”文件夹</strong>
              <p>文件夹</p>
              <p class="date">修改日期: <span class="en">2012</span>年<span class="en">11</span>月<span class="en">26</span>日,<br><span class="en">14:54</span></p>
            </div>
          </section>
        </div>
        <ul class="files">
          <li><svg width="48" height="48"><use href="#bigfolder"/></svg><div><span class="en focus">Document fonts</span></div></li>
          <li><svg width="48" height="48"><use href="#bigfolder"/></svg><div><span class="en">Links</span></div></li>
          <li>
            <svg width="48" height="48" viewBox="0 0 48 48"><path d="M12.500 2.500H37L45.500 10V46.500H12.500Z" fill="#f6f6f6" stroke="#bbb"/><path d="M37 2.500V10H45.500" fill="#fff" stroke="#bbb"/><path d="M2 3H34V16H2Z" fill="#4a0a38"/><text x="7" y="13" class="tag" fill="#f05ab8">LOCK</text><path d="M24 30V26Q24 22 28.500 22Q33 22 33 26V30" fill="none" stroke="#888" stroke-width="2"/><path d="M21 29H36V39H21Z" fill="#aaa" stroke="#777"/><path d="M28.500 32V36" stroke="#333" stroke-width="2"/></svg>
            <div><span class="en">~01~uwme6w.idlk</span><span class="en info">InDesign Lock File</span><span class="en info">0 KB</span></div>
          </li>
          <li>
            <svg width="48" height="48" viewBox="0 0 48 48"><path d="M12 1H37L46 10V47H12Z" fill="#3b1229"/><path d="M37 1V10H46Z" fill="#f04aa8"/><path d="M2 3H34V17H2Z" fill="#ee3fa8"/><text x="7" y="13" class="tag" fill="#4a0a38">INDD</text><text x="21" y="40" class="bigid" fill="#ee3fa8">Id</text></svg>
            <div><span class="en">01.indd</span><span class="en info">InDesign Document</span><span class="en info">29,468 KB</span></div>
          </li>
          <li>
            <svg width="48" height="48" viewBox="0 0 48 48"><path d="M10 6H37L38 41L12 45Z" fill="#fdfdff" stroke="#8a8ea8"/><path d="M38 8V42L12 46" fill="none" stroke="#8588b0" stroke-width="2"/><path d="M11 7L14 3M15 7L18 3M19 7L22 3M23 7L26 3M27 7L30 3M31 7L34 3M34 7L37 4" stroke="#a3983c" stroke-width="2"/><path d="M14 13L20 12M14 17L20 16M15 24L33 22M15 28L31 26M15 32L32 30M15 38L21 37M15 42L21 41" stroke="#223" stroke-width="1.500"/></svg>
            <div><span>说明<span class="en">.txt</span></span><span class="info">文本文档</span><span class="en info">5 KB</span></div>
          </li>
        </ul>
      </div>
    </div>
  </div>
</body>
</html>
```
FILE: styles.css
```css
* {
  box-sizing: border-box;
}
body {
  margin: 0;
  font: 12px/12px "Noto Sans CJK SC", sans-serif;
  color: #111;
  background: #c2c2c2;
  overflow: hidden;
}
button {
  display: flex;
  align-items: center;
  padding: 0;
  border: 0;
  background: none;
  font: inherit;
  color: inherit;
  white-space: nowrap;
}
input, select {
  min-width: 0;
  border: 0;
  padding: 0;
  background: none;
  font: inherit;
  color: inherit;
  outline: none;
}
ul, h1, h2, p {
  margin: 0;
  padding: 0;
  list-style: none;
}
svg {
  display: block;
  flex: none;
}
.defs {
  position: absolute;
}
.en {
  font-family: "Liberation Mono", monospace;
  font-size: 10px;
  line-height: 0;
}
button .en {
  line-height: 12px;
}
.app {
  display: flex;
  flex-direction: column;
  height: 100vh;
  padding: 0 2px 3px;
}
.tri {
  border: 4px solid transparent;
  border-top: 5px solid #222;
  border-bottom: 0;
}
.tri.small {
  border-width: 4px 3px 0;
}
.tri.tiny {
  border-width: 3px 3px 0;
}
.tri.pale {
  border-top-color: #bbb;
}

/* menu bar */
.menubar {
  display: flex;
  height: 33px;
  flex: none;
  background: linear-gradient(#cecece, #c0c0c0 8px);
}
.logo {
  width: 47px;
  padding-left: 8px;
  font: bold 21px/29px "Open Sans", sans-serif;
  color: #4b3442;
}
.menus {
  display: flex;
  gap: 18px;
  height: 28px;
}
.appbar {
  display: flex;
  align-items: center;
  margin: 0 0 0 12px;
  border-left: 1px solid #aaa;
  padding-left: 14px;
}
.bridge {
  justify-content: center;
  width: 17px;
  height: 16px;
  border: 1px solid #333;
  background: #8a8a8a;
  font: bold 10px/12px "Liberation Sans", sans-serif;
}
.zoom {
  gap: 7px;
  margin: 0 11px 0 24px;
  font-family: "DejaVu Sans", sans-serif;
  font-size: 11px;
  color: #444;
}
.vline {
  width: 1px;
  height: 22px;
  background: #a4a4a4;
}
.view {
  gap: 1px;
  margin-left: 17px;
  padding-right: 3px;
}
.menuright {
  display: flex;
  align-items: center;
  height: 29px;
  margin-left: auto;
}
.workspace {
  gap: 9px;
  padding: 0 13px 0 10px;
  color: #222;
}
.search {
  display: flex;
  align-items: center;
  width: 122px;
  height: 18px;
  margin: 0 10px;
  padding-left: 3px;
  border: 1px solid #777;
  border-radius: 2px;
}
.search input {
  width: 90px;
}
.winbtns {
  display: flex;
  align-self: flex-start;
  height: 18px;
  margin-right: 3px;
  border: 1px solid #999;
  border-top: 0;
  border-radius: 0 0 4px 4px;
}
.winbtns button {
  justify-content: center;
  width: 27px;
}
.winbtns button + button {
  border-left: 1px solid #999;
}
.winbtns button:last-child {
  width: 47px;
}

/* control panel */
.control {
  display: flex;
  align-items: center;
  gap: 6px;
  height: 48px;
  flex: none;
  padding: 0 4px;
  border: 1px solid #5c5c5c;
  background: #ece8d9;
}
.grip-v {
  width: 4px;
  height: 20px;
  background: repeating-linear-gradient(#777 0 1px, transparent 1px 2px);
}
.ref {
  margin: 0 1px 0 7px;
}
.sep {
  width: 1px;
  height: 36px;
  background: #b5b1a3;
}
.group {
  display: grid;
  grid-auto-rows: 18px;
  gap: 3px;
  align-items: center;
  justify-items: center;
}
.pos {
  grid-template-columns: 12px 79px 14px 79px;
  font: bold 10px/12px "Liberation Mono", monospace;
}
.pos label {
  white-space: nowrap;
}
.chained {
  display: flex;
  align-items: center;
  gap: 4px;
}
.scale {
  grid-template-columns: 13px 79px;
}
.shear {
  grid-template-columns: 15px 79px;
}
.rotate {
  grid-template-columns: 18px 18px;
  column-gap: 6px;
}
.select {
  grid-template-columns: 18px 20px;
  column-gap: 6px;
}
.paint {
  grid-template-columns: 17px 15px;
  gap: 3px 1px;
  margin: 0 -1px;
}
.weight {
  grid-template-columns: 79px;
}
.wrap {
  grid-template-columns: 20px 20px;
}
.corner {
  grid-template-columns: 15px 64px;
}
.style {
  grid-template-columns: 15px 147px;
}
.field {
  display: flex;
  align-items: center;
  width: 100%;
  height: 18px;
  padding: 1px;
  border: 1px solid #8ba5cf;
  background: #fff;
  font: 12px/14px "Noto Sans CJK SC", sans-serif;
}
.field > svg:first-child:not(.angle) {
  width: 13px;
  height: 14px;
  padding: 1px 2px;
  background: #c3d3fb;
  color: #41598c;
}
.field input {
  flex: 1;
  width: 20px;
  padding-left: 3px;
}
.field button, .chev {
  display: flex;
  flex: none;
  justify-content: center;
  align-items: center;
  width: 15px;
  height: 14px;
  border-radius: 1px;
  background: linear-gradient(135deg, #d5e1fd, #aac2f5);
  color: #3f5b94;
}
.field button svg, .chev svg {
  width: 10px;
  height: 10px;
}
.field.off, .field.dim {
  background: #ece8d9;
}
.field.dim {
  border-color: #cfccc0;
}
.field.off > svg:first-child, .field.dim > svg:first-child, .field.dim button {
  background: #f5f3eb;
  color: #b9b6ab;
}
.field.off input {
  color: #a7a498;
}
.link {
  justify-content: center;
  width: 17px;
  height: 24px;
  border: 1px solid #8fa3bb;
  border-radius: 3px;
  background: #fff;
}
/* only the four corners of the frame are drawn */
.pmark {
  width: 24px;
  background:
    linear-gradient(#aaa698, #aaa698) 0 0 / 4px 1px,
    linear-gradient(#aaa698, #aaa698) 0 0 / 1px 4px,
    linear-gradient(#aaa698, #aaa698) 100% 0 / 4px 1px,
    linear-gradient(#aaa698, #aaa698) 100% 0 / 1px 4px,
    linear-gradient(#aaa698, #aaa698) 0 100% / 4px 1px,
    linear-gradient(#aaa698, #aaa698) 0 100% / 1px 4px,
    linear-gradient(#aaa698, #aaa698) 100% 100% / 4px 1px,
    linear-gradient(#aaa698, #aaa698) 100% 100% / 1px 4px;
  background-repeat: no-repeat;
  font: 22px/26px "Liberation Serif", serif;
  text-align: center;
  color: #aaa698;
}
.paint .chev {
  height: 18px;
}
.stroke {
  flex: 1;
  height: 8px;
  margin: 0 4px;
  background: #000;
}
.effects {
  display: grid;
  gap: 3px;
  width: 68px;
}
.fxrow {
  display: flex;
  align-items: center;
  justify-content: space-between;
  height: 18px;
}
.fx {
  font: italic bold 16px/16px "Liberation Serif", serif;
}
.opacity {
  width: 51px;
  font: bold 10px/14px "Liberation Mono", monospace;
}
.wrap button {
  justify-content: center;
  width: 20px;
  height: 18px;
}
.wrap .on {
  border: 1px solid #8fa3bb;
  border-radius: 3px;
  background: #fff;
}
.shape {
  justify-self: start;
  justify-content: space-between;
  width: 44px;
  padding-left: 4px;
}
.drop {
  position: relative;
  width: 100%;
  height: 18px;
  border: 1px solid #8ba5cf;
  background: #fff;
}
.drop select {
  display: block;
  width: 100%;
  height: 16px;
  padding-left: 4px;
  line-height: 16px;
  appearance: none;
}
.drop .chev {
  position: absolute;
  top: 1px;
  right: 1px;
  pointer-events: none;
}
.overrides {
  display: flex;
  gap: 5px;
  justify-self: end;
}
.quick {
  display: flex;
  align-items: center;
  gap: 6px;
  margin-left: auto;
}

/* work area */
.stage {
  display: flex;
  flex: 1;
  justify-content: space-between;
  min-height: 0;
  background: #6e6e6e;
}
.cap {
  display: flex;
  align-items: center;
  height: 12px;
  padding: 0 4px;
  border-bottom: 1px solid #5a5a5a;
  background: linear-gradient(#777, #929292);
}
.grip {
  display: flex;
  justify-content: center;
  align-items: center;
}
.grip::before {
  content: "";
  width: 20px;
  height: 4px;
  background: repeating-linear-gradient(90deg, #777 0 1px, transparent 1px 2px);
}
.tools {
  display: flex;
  flex-direction: column;
  align-items: center;
  align-self: flex-start;
  width: 32px;
  height: 100%;
  border-left: 1px solid #666;
  border-right: 1px solid #555;
  background: linear-gradient(#ece8d9 601px, #777 601px 602px, #c2c2c2 602px);
}
.tools .cap {
  align-self: stretch;
}
.tools .grip {
  height: 16px;
}
.tool {
  position: relative;
  justify-content: center;
  width: 24px;
  height: 21px;
}
.tool svg {
  width: 19px;
  height: 19px;
}
.tool.on {
  border: 1px solid #98a4ae;
  border-radius: 3px;
  background: #fff;
}
.more {
  position: relative;
}
.more::after {
  content: "";
  position: absolute;
  right: 0;
  bottom: 2px;
  border-left: 4px solid transparent;
  border-bottom: 4px solid #111;
}
.type {
  font: 19px/21px "Liberation Serif", serif;
  color: #333;
}
.tools hr {
  width: 24px;
  margin: 3px 0;
  border: 0;
  border-top: 1px solid #aaa79a;
}
.tools hr.tight {
  margin: 2px 0;
}
.affect {
  display: flex;
  align-items: center;
  gap: 5px;
  height: 12px;
  font: bold 10px/12px "Liberation Serif", serif;
}
.mode {
  justify-content: center;
  width: 24px;
  height: 21px;
  border: 1px solid #98a4ae;
  border-radius: 3px;
  background: #fff;
}
.dock {
  width: 166px;
  border: solid #5a5a5a;
  border-width: 0 1px;
  background: #c2c2c2;
}
.dock .cap {
  justify-content: flex-end;
}
.dock section {
  display: grid;
  gap: 4px;
  padding-bottom: 5px;
  border-bottom: 1px solid #666;
  background: #ece8d9;
}
.dock .grip {
  height: 11px;
  margin-bottom: -4px;
  background: #c0c0c0;
}
.dock button {
  gap: 8px;
  height: 24px;
  padding-left: 10px;
  color: #222;
}

/* explorer window */
.window {
  position: absolute;
  left: 674px;
  top: 109px;
  width: 563px;
  padding: 0 4px 4px;
  border-radius: 7px 7px 0 0;
  background: #0a45d8;
  box-shadow: inset 1px 0 #0831b9, inset -1px -1px #0831b9;
}
.titlebar {
  display: flex;
  align-items: center;
  height: 30px;
  margin: 0 -4px;
  padding: 3px 6px 0;
  border-radius: 7px 7px 0 0;
  background: linear-gradient(#0b3ec6, #3c8cf8 2px, #0a5be8 6px, #0553e0 14px, #0666fb 24px, #0448c8);
}
.titlebar h1 {
  margin-left: 6px;
  font-size: 13px;
  line-height: 14px;
  color: #fff;
}
.titlebar h1 .en, .details strong .en {
  font-size: 12px;
}
.caption {
  display: flex;
  gap: 2px;
  margin-left: auto;
}
.caption button {
  width: 21px;
  height: 21px;
  border: 1px solid #fff;
  border-radius: 3px;
  background: linear-gradient(135deg, #6f9df5, #2458dd 60%, #2f6cf0);
}
.caption .close {
  background: linear-gradient(135deg, #f0957c, #d9482a 60%, #c73c1c);
}
.client {
  background: #efecdf;
}
.xmenu {
  display: flex;
  gap: 16px;
  height: 23px;
  padding-left: 9px;
  border-bottom: 1px solid #d8d5c8;
}
.flag {
  display: flex;
  align-items: center;
  justify-content: center;
  width: 40px;
  margin-left: auto;
  border-left: 1px solid #d0cdc0;
  background: #fff;
}
.xtools {
  display: flex;
  align-items: center;
  height: 40px;
  padding-left: 9px;
  border-bottom: 1px solid #d0cdc0;
}
.xtools button {
  gap: 4px;
}
.back .tri {
  margin-left: 5px;
}
.forward {
  margin-left: 13px;
}
.forward .tri {
  margin-left: 4px;
}
.up {
  margin: 0 7px 0 11px;
}
.xsep {
  width: 1px;
  height: 34px;
  background: #ccc9bb;
}
.find {
  margin-left: 5px;
}
.dirs {
  margin: 0 9px 0 11px;
}
.views {
  margin: 0 7px;
}
.xtools .views {
  gap: 2px;
}
.xtools .sync {
  gap: 5px;
  margin-left: 7px;
}
.address {
  display: flex;
  align-items: center;
  height: 23px;
  padding: 0 9px 0 5px;
}
.address label {
  color: #777;
}
.addrbox {
  display: flex;
  flex: 1;
  align-items: center;
  height: 20px;
  margin: 0 6px 0 5px;
  padding: 0 1px 0 2px;
  border: 1px solid #8ba5cf;
  background: #fff;
}
.addrbox input {
  flex: 1;
  padding-left: 3px;
}
.addrbox .chev {
  height: 17px;
}
.go {
  gap: 4px;
}
.xbody {
  display: flex;
}
.sidepane {
  display: grid;
  gap: 15px;
  width: 210px;
  padding: 12px 12px 19px;
  border-left: 1px solid #fff;
  background: linear-gradient(#7aa1e6, #6375d6);
}
.card {
  border-radius: 4px 4px 0 0;
  overflow: hidden;
}
.card h2 {
  display: flex;
  align-items: center;
  justify-content: space-between;
  height: 25px;
  padding: 0 5px 0 14px;
  background: linear-gradient(90deg, #fff 30%, #c7d4f7);
  font-size: 13px;
  line-height: 14px;
  color: #215dc6;
}
.card ul {
  display: grid;
  gap: 4px;
  padding: 10px 0 10px 12px;
  border: 1px solid #fff;
  border-top: 0;
  background: #d6dff7;
}
.card li {
  display: flex;
  gap: 8px;
}
.card a {
  color: #215dc6;
  text-decoration: none;
}
.details {
  padding: 10px 8px 10px 14px;
  border: 1px solid #fff;
  border-top: 0;
  background: #d6dff7;
}
.details strong {
  display: block;
  font-size: 13px;
}
.details .date {
  margin-top: 5px;
}
.files {
  flex: 1;
  padding: 2px 0 0 4px;
  background: #fff;
}
.files li {
  display: flex;
  align-items: center;
  gap: 6px;
  height: 56px;
}
.files li > div > span {
  display: block;
  line-height: 12px;
}
.files .focus {
  outline: 1px dotted #111;
}
.info {
  color: #888;
}
.tag {
  font: bold 9px "Open Sans", sans-serif;
}
.bigid {
  font: bold 20px "Open Sans", sans-serif;
}
```
